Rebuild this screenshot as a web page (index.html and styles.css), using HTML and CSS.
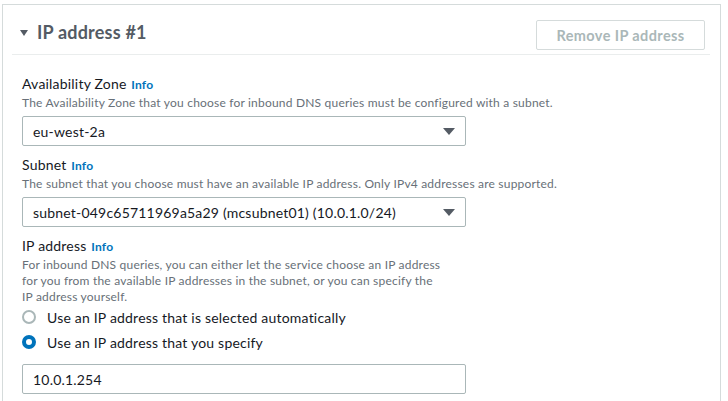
FILE: index.html
```html
<!DOCTYPE html>
<html lang="en">
<head>
<meta charset="utf-8">
<title>IP address #1</title>
<link rel="stylesheet" href="styles.css">
</head>
<body>
<div class="page">
  <section class="panel">
    <header class="panel-head">
      <h2 class="panel-title">
        <svg class="caret" width="8" height="6" viewBox="0 0 8 6"><path d="M0 0H8L4 6Z" fill="#545b64"/></svg>
        IP address #1
      </h2>
      <button class="btn-disabled" type="button">Remove IP address</button>
    </header>
    <div class="panel-body">
      <div class="field">
        <div class="label">Availability Zone <a class="info">Info</a></div>
        <div class="desc">The Availability Zone that you choose for inbound DNS queries must be configured with a subnet.</div>
        <div class="select">
          <span>eu-west-2a</span>
          <svg class="arrow" width="12" height="7" viewBox="0 0 12 7"><path d="M0 0H12L6 7Z" fill="#545b64"/></svg>
        </div>
      </div>
      <div class="field">
        <div class="label">Subnet <a class="info">Info</a></div>
        <div class="desc">The subnet that you choose must have an available IP address. Only IPv4 addresses are supported.</div>
        <div class="select">
          <span>subnet-049c65711969a5a29 (mcsubnet01) (10.0.1.0/24)</span>
          <svg class="arrow" width="12" height="7" viewBox="0 0 12 7"><path d="M0 0H12L6 7Z" fill="#545b64"/></svg>
        </div>
      </div>
      <div class="field">
        <div class="label">IP address <a class="info">Info</a></div>
        <div class="desc">For inbound DNS queries, you can either let the service choose an IP address<br>for you from the available IP addresses in the subnet, or you can specify the<br>IP address yourself.</div>
        <div class="radios">
          <label class="radio"><span class="dot"></span>Use an IP address that is selected automatically</label>
          <label class="radio"><span class="dot checked"></span>Use an IP address that you specify</label>
        </div>
        <div class="input">10.0.1.254</div>
      </div>
    </div>
  </section>
</div>
</body>
</html>
```
FILE: styles.css
```css
* { box-sizing: border-box; }
html, body { margin: 0; padding: 0; background: #ffffff; }
body {
  font-family: Lato, "Open Sans", "Liberation Sans", sans-serif;
  color: #16191f;
  letter-spacing: 0.2px;
  overflow: hidden;
}
.page { padding: 4px 7px 0 2px; }
.panel {
  border: 1px solid #d5dbdb;
  border-bottom: none;
  height: 420px;
}
.panel-head {
  margin: 0 10px 0 9px;
  padding: 15px 5px 4px 8px;
  border-bottom: 1px solid #eaeded;
  display: flex;
  justify-content: space-between;
  align-items: flex-start;
}
.panel-title {
  margin: 1px 0 0;
  font-size: 18px;
  line-height: 22px;
  font-weight: 700;
  color: #545b64;
  display: flex;
  align-items: center;
}
.caret { margin-right: 9px; margin-top: 1px; }
.btn-disabled {
  width: 169px;
  height: 30px;
  border: 1px solid #d5dbdb;
  border-radius: 2px;
  background: #ffffff;
  color: #aab7b8;
  font-family: inherit;
  font-size: 14.5px;
  letter-spacing: 0.4px;
  font-weight: 700;
  padding: 0;
}
.panel-body { padding: 19px 0 0 19px; }
.field { width: 444px; margin-bottom: 9px; }
.label { font-size: 14px; line-height: 20px; color: #16191f; }
.info { font-size: 12px; font-weight: 700; color: #0073bb; text-decoration: none; margin-left: 1px; }
.desc { font-size: 12px; line-height: 16px; color: #687078; white-space: nowrap; }
.select, .input {
  margin-top: 5px;
  height: 30px;
  border: 1px solid #aab7b8;
  border-radius: 2px;
  display: flex;
  align-items: center;
  justify-content: space-between;
  padding: 0 10px 0 10px;
  font-size: 14px;
  color: #16191f;
}
.radios { display: flex; flex-direction: column; }
.radio {
  height: 24px;
  display: flex;
  align-items: center;
  font-size: 14px;
  color: #16191f;
}
.radio + .radio { margin-top: 1px; }
.dot {
  width: 14px;
  height: 14px;
  border-radius: 50%;
  border: 2px solid #aab7b8;
  margin-right: 11px;
  flex: none;
}
.dot.checked { border: 4.5px solid #0073bb; }
.input { margin-top: 10px; }
```
